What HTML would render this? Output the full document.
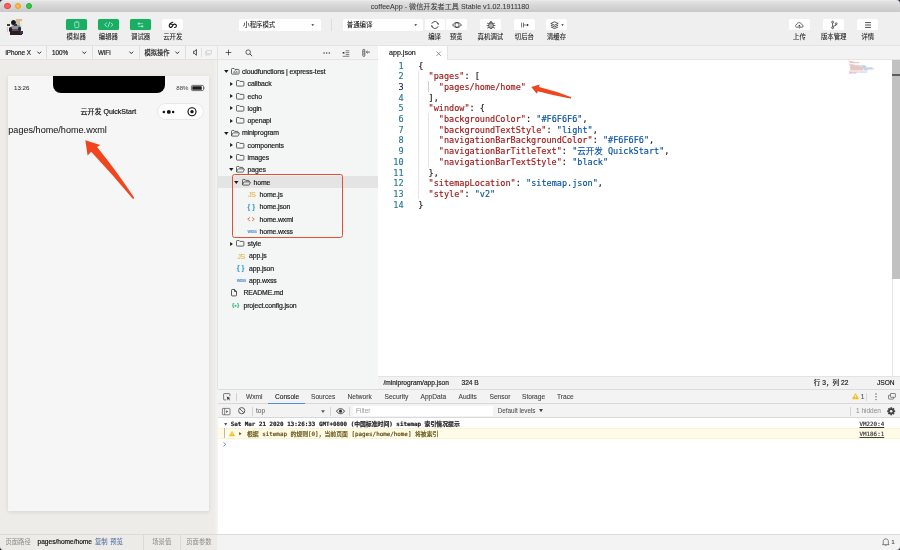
<!DOCTYPE html>
<html lang="zh-CN">
<head>
<meta charset="utf-8">
<title>coffeeApp - 微信开发者工具 Stable v1.02.1911180</title>
<style>
*{box-sizing:border-box;margin:0;padding:0}
html,body{width:900px;height:550px;overflow:hidden;background:#f3f3f3}
body{position:relative;font-family:"Liberation Sans","Noto Sans CJK SC",sans-serif;font-size:7px;color:#222;-webkit-font-smoothing:antialiased}
#wrap{position:absolute;left:0;top:0;width:900px;height:550px;will-change:transform}
.a{position:absolute}
.t{position:absolute;white-space:nowrap;line-height:10px;height:10px;-webkit-text-stroke:.18px}
.mono{font-family:"DejaVu Sans Mono","Liberation Mono","Noto Sans CJK SC",monospace}
svg{position:absolute;overflow:visible}
/* ---------- title bar ---------- */
#titlebar{left:0;top:0;width:900px;height:11.800px;background:linear-gradient(#efefef 0,#e3e3e3 1.200px,#d6d6d6 6px,#c9c9c9 11.800px)}
#titlebar .dot{position:absolute;top:2.7px;width:6.6px;height:6.6px;border-radius:50%}
/* ---------- main toolbar ---------- */
#toolbar{left:0;top:12px;width:900px;height:33px;background:#efefef}
.btn{position:absolute;top:19px;height:11.4px;border-radius:1.6px;background:#fff}
.btn.g{background:#1bad64;box-shadow:0 0 0 .6px #c9f3dd}
.lbl{-webkit-text-stroke:.08px;position:absolute;top:31.8px;height:10px;line-height:10px;font-size:6.4px;color:#1c1c1c;text-align:center;white-space:nowrap;transform:translateX(-50%)}
/* ---------- simulator ---------- */
#sim{left:0;top:45px;width:217px;height:489px;background:linear-gradient(90deg,#eeece9 214px,#f3f2f0 217px)}
#simbar{left:0;top:45px;width:217px;height:15px;background:#f4f4f4;border-top:1px solid #e2e2e2;border-bottom:1px solid #e4e2df}
#phone{left:8px;top:76px;width:200.7px;height:434.6px;background:#f6f6f6;box-shadow:0 1px 4px rgba(0,0,0,.10)}
/* ---------- file tree ---------- */
#tree{left:217px;top:45px;width:161px;height:344px;background:#f4f5f5;border-left:1px solid #e4e4e4}
#treebar{left:218px;top:45px;width:160px;height:15px;border-top:1px solid #e4e4e4;border-bottom:1px solid #e4e4e4;background:#f4f4f4}
/* ---------- editor ---------- */
#edtabs{left:378px;top:45px;width:522px;height:15px;background:#f3f3f3;border-top:1px solid #e4e4e4;border-bottom:1px solid #e4e4e4}
#edtab{left:378px;top:46px;width:69.5px;height:14px;background:#fff;border-right:1px solid #e4e4e4}
#editor{left:378px;top:60px;width:522px;height:316px;background:#fff}
.ln{-webkit-text-stroke:.14px;position:absolute;left:378px;width:25.6px;text-align:right;font-size:8.52px;line-height:10.7px;height:10.7px;color:#237893}
.cl{-webkit-text-stroke:.14px;position:absolute;left:418.3px;font-size:8.52px;line-height:10.7px;height:10.7px;white-space:pre;color:#111}
.k{color:#a31515}.s{color:#0451a5}
#edstatus{left:378px;top:376px;width:522px;height:13px;background:#f2f2f2;border-top:1px solid #e3e3e3}
/* ---------- debugger ---------- */
#dbg{left:218px;top:389px;width:682px;height:145px;background:#fff}
#dbgtabs{left:218px;top:389px;width:682px;height:15px;background:#f3f3f3;border-top:1px solid #dcdcdc;border-bottom:1px solid #d8d8d8}
#dbgbar{left:218px;top:404px;width:682px;height:14px;background:#f3f3f3;border-bottom:1px solid #dadada}
.tab{position:absolute;top:391.5px;height:10px;line-height:10px;font-size:6.62px;color:#444;white-space:nowrap;-webkit-text-stroke:.1px}
/* ---------- bottom bar ---------- */
#bottom{left:0;top:534px;width:900px;height:16px;background:#f3f3f3;border-top:1px solid #dcdcdc}
#bottoml{left:0;top:534px;width:217px;height:16px;background:#edebe8;border-top:1px solid #dddbd8}
</style>
</head>
<body>
<div id="wrap">
<!-- panels -->
<div class="a" id="toolbar"></div>
<div class="a" id="titlebar">
  <span class="dot" style="left:4.2px;background:#fc615d;border:.4px solid #e2463f"></span>
  <span class="dot" style="left:14.9px;background:#fdbc40;border:.4px solid #e0a028"></span>
  <span class="dot" style="left:25.6px;background:#34c84a;border:.4px solid #27aa35"></span>
  <div class="t" style="left:0;width:900px;text-align:center;top:2.100px;font-size:7.13px;color:#3a3a3a;-webkit-text-stroke:.06px">coffeeApp - 微信开发者工具 Stable v1.02.1911180</div>
</div>
<div class="a" id="sim"></div>
<div class="a" id="simbar"></div>
<div class="a" id="phone"></div>
<div class="a" id="tree"></div>
<div class="a" id="treebar"></div>
<div class="a" id="edtabs"></div>
<div class="a" id="edtab"></div>
<div class="a" id="editor"></div>
<div class="a" id="edstatus"></div>
<div class="a" id="dbg"></div>
<div class="a" id="dbgtabs"></div>
<div class="a" id="dbgbar"></div>
<div class="a" id="bottom"></div>
<div class="a" id="bottoml"></div>
<!--TOOLBAR-->
<!-- avatar (abstracted photo) -->
<div class="a" style="left:6px;top:18.300px;width:17px;height:16.500px;border-radius:1.500px;overflow:hidden;background:#eeedea">
 <div class="a" style="left:0;top:0;width:17px;height:16.500px;filter:blur(.55px)">
  <div class="a" style="left:9.500px;top:.5px;width:6px;height:10px;background:#cdbf9b"></div>
  <div class="a" style="left:13.800px;top:3px;width:2.200px;height:9px;background:#efe9dc"></div>
  <div class="a" style="left:1px;top:5.600px;width:2.800px;height:2px;background:#4a3a22"></div>
  <div class="a" style="left:.8px;top:9px;width:1.600px;height:5px;background:#c9c9c9"></div>
  <div class="a" style="left:4.500px;top:6.500px;width:10.500px;height:7px;border-radius:3px 3px 0 0;background:#8a91a6"></div>
  <div class="a" style="left:5.300px;top:1.400px;width:5.200px;height:5.600px;border-radius:50%;background:#15141a"></div>
  <div class="a" style="left:7.500px;top:5.500px;width:3px;height:2px;background:#3a3540"></div>
  <div class="a" style="left:3.300px;top:8.500px;width:3px;height:5px;border-radius:1.500px;background:#1b1c2b"></div>
  <div class="a" style="left:12.300px;top:9px;width:2.600px;height:4px;border-radius:1.300px;background:#23243a"></div>
  <div class="a" style="left:6px;top:10.800px;width:6px;height:2.200px;background:#6b4a4a"></div>
  <div class="a" style="left:3.600px;top:12.800px;width:12.600px;height:3.700px;background:#2a1d20"></div>
  <div class="a" style="left:13.500px;top:12.500px;width:3px;height:3px;background:#3a3358"></div>
 </div>
</div>
<!-- green mode buttons -->
<div class="btn g" style="left:65.5px;width:21.4px"></div>
<div class="btn g" style="left:97.7px;width:21.4px"></div>
<div class="btn g" style="left:129.9px;width:21.4px"></div>
<div class="btn" style="left:162.1px;width:21.4px"></div>
<svg style="left:65.5px;top:19px" width="22" height="12" viewBox="0 0 22 12"><rect x="8.800" y="2.800" width="4" height="5.900" rx=".8" fill="none" stroke="#9fe6c3" stroke-width=".9"/><line x1="9.8" y1="3.6" x2="11.8" y2="3.6" stroke="#9fe6c3" stroke-width=".5"/></svg>
<svg style="left:97.7px;top:19px" width="22" height="12" viewBox="0 0 22 12"><path d="M8.6 3.9 6.6 5.7 8.6 7.5M13 3.9 15 5.7 13 7.5M11.6 3.4 10 8" fill="none" stroke="#a8ead0" stroke-width=".9" stroke-linecap="round" stroke-linejoin="round"/></svg>
<svg style="left:0;top:0" width="200" height="40" viewBox="0 0 200 40"><path d="M138 23.600H143.100M138 26.400H143.100" stroke="#9fe6c3" stroke-width=".7"/><rect x="137.800" y="22.700" width="1.900" height="1.800" fill="#b5edd2"/><rect x="141.300" y="25.500" width="1.900" height="1.800" fill="#b5edd2"/></svg>
<svg style="left:0;top:0" width="200" height="40" viewBox="0 0 200 40"><path d="M172.800 22.300C171 22.800 169.200 24 169.200 25.800 169.200 27.200 170.600 27.800 171.600 27 172.700 26.100 172.700 24.700 174 24.200 175.300 23.800 176.500 24.800 176.400 26 176.300 27 175.500 27.500 174.600 27.500M170.300 24.200C171.100 23.900 172 24.300 172.400 25.100" fill="none" stroke="#111" stroke-width="1.100" stroke-linecap="round"/></svg>
<div class="lbl" style="left:76.2px">模拟器</div>
<div class="lbl" style="left:108.4px">编辑器</div>
<div class="lbl" style="left:140.6px">调试器</div>
<div class="lbl" style="left:172.8px">云开发</div>
<!-- dropdowns -->
<div class="btn" style="left:239px;width:81.5px;height:11.700px"></div>
<div class="t" style="left:243.3px;top:20px;font-size:6.4px;color:#111;-webkit-text-stroke:.05px">小程序模式</div>
<svg style="left:310.5px;top:24px" width="4" height="3" viewBox="0 0 4 3"><path d="M.4.3h2.600L1.700 2.100z" fill="#222"/></svg>
<div class="a" style="left:331.3px;top:19px;width:.7px;height:11.5px;background:#dcdcdc"></div>
<div class="btn" style="left:342.5px;width:80.5px;height:11.700px"></div>
<div class="t" style="left:346.8px;top:20px;font-size:6.4px;color:#111;-webkit-text-stroke:.05px">普通编译</div>
<svg style="left:413.7px;top:24px" width="4" height="3" viewBox="0 0 4 3"><path d="M.4.3h2.600L1.700 2.100z" fill="#222"/></svg>
<!-- middle buttons -->
<div class="btn" style="left:424.7px;width:20.5px"></div>
<div class="btn" style="left:446.2px;width:20.6px"></div>
<div class="btn" style="left:480px;width:21px"></div>
<div class="btn" style="left:514px;width:21px"></div>
<div class="btn" style="left:546px;width:21px"></div>
<svg style="left:429.6px;top:20px" width="10" height="10" viewBox="0 0 10 10"><path d="M1.900 3.400A3.400 3.400 0 0 1 8.300 4.200M8.100 6.600A3.400 3.400 0 0 1 1.700 5.800" fill="none" stroke="#222" stroke-width=".8" stroke-linecap="round"/><path d="M8.900 3.200 8.300 4.600 7 3.800zM1.100 6.800 1.700 5.400 3 6.200z" fill="#222"/></svg>
<svg style="left:451.500px;top:20px" width="10" height="10" viewBox="0 0 10 10"><path d="M.6 5C1.700 3.300 3.300 2.500 5 2.500S8.300 3.300 9.400 5C8.300 6.700 6.700 7.500 5 7.500S1.700 6.700.6 5z" fill="none" stroke="#222" stroke-width=".75"/><ellipse cx="5" cy="5" rx="2.100" ry="2.300" fill="none" stroke="#222" stroke-width=".7"/></svg>
<svg style="left:485.500px;top:19.700px" width="10" height="10" viewBox="0 0 10 10"><ellipse cx="5" cy="5.600" rx="2.200" ry="2.900" fill="none" stroke="#222" stroke-width=".75"/><path d="M5 2.700V8.500M3.700 3C3.800 1.900 4.300 1.400 5 1.400S6.200 1.900 6.300 3M2.800 5.600H1M9 5.600H7.200M3.100 4 1.500 3.300M6.900 4 8.500 3.300M3.100 7.300 1.500 8M6.900 7.300 8.500 8" fill="none" stroke="#222" stroke-width=".7" stroke-linecap="round"/></svg>
<svg style="left:519.500px;top:20px" width="10" height="10" viewBox="0 0 10 10"><path d="M1.600 2.600v4.800M3.500 2.600v4.800M3.500 5h4" fill="none" stroke="#222" stroke-width=".6"/><path d="M7 3.700 8.900 5 7 6.300z" fill="#222"/></svg>
<svg style="left:549.500px;top:20px" width="10" height="10" viewBox="0 0 10 10"><path d="M4.500 1.800 8.200 3.500 4.500 5.200.8 3.500zM.9 5.200 4.500 6.900 8.100 5.200M.9 6.900 4.500 8.600 8.100 6.900" fill="none" stroke="#222" stroke-width=".75" stroke-linejoin="round"/></svg>
<svg style="left:560.800px;top:23.800px" width="4" height="3" viewBox="0 0 4 3"><path d="M.3.300h2.400L1.500 1.900z" fill="#222"/></svg>
<div class="lbl" style="left:434.6px">编译</div>
<div class="lbl" style="left:456.1px">预览</div>
<div class="lbl" style="left:490.4px">真机调试</div>
<div class="lbl" style="left:524.4px">切后台</div>
<div class="lbl" style="left:556.5px">清缓存</div>
<!-- right buttons -->
<div class="btn" style="left:788.9px;width:21.2px"></div>
<div class="btn" style="left:823.1px;width:21.2px"></div>
<div class="btn" style="left:857.1px;width:21.300px"></div>
<svg style="left:795.200px;top:20.700px" width="8.700" height="8.700" viewBox="0 0 10 10"><path d="M3.600 7.300H2.500C1.400 7.300.6 6.500.6 5.500c0-.9.700-1.700 1.600-1.800C2.500 2.600 3.600 1.900 4.900 1.900c1.500 0 2.700 1 2.900 2.300.9.100 1.600.800 1.600 1.600 0 .9-.7 1.500-1.600 1.500H6.400" fill="none" stroke="#222" stroke-width=".75" stroke-linecap="round"/><path d="M5 8.300V5M3.800 6.100 5 4.800 6.200 6.100" fill="none" stroke="#222" stroke-width=".75" stroke-linecap="round" stroke-linejoin="round"/></svg>
<svg style="left:828.500px;top:19.500px" width="10" height="10" viewBox="0 0 10 10"><circle cx="3.600" cy="2.100" r=".95" fill="none" stroke="#222" stroke-width=".7"/><circle cx="3.600" cy="7.700" r=".95" fill="none" stroke="#222" stroke-width=".7"/><circle cx="7.200" cy="3.700" r=".95" fill="none" stroke="#222" stroke-width=".7"/><path d="M3.600 3.100v3.600M7.200 4.700C7.200 6 5 5.600 3.700 6.700" fill="none" stroke="#222" stroke-width=".7"/></svg>
<svg style="left:862.700px;top:20px" width="10" height="10" viewBox="0 0 10 10"><path d="M2.100 2.600h5.900M2.100 5h5.900M2.100 7.400h5.900" stroke="#222" stroke-width=".8"/></svg>
<div class="lbl" style="left:799.5px">上传</div>
<div class="lbl" style="left:833.7px">版本管理</div>
<div class="lbl" style="left:867.8px">详情</div>
<!--/TOOLBAR-->
<!--SIM-->
<!-- simulator toolbar -->
<div class="t" style="left:5.4px;top:47.700px;font-size:6.3px;color:#222">iPhone X</div>
<svg style="left:36.800px;top:50.500px" width="4.600" height="3.700" viewBox="0 0 5 4"><path d="M.5.700 2.500 2.900 4.500.7" fill="none" stroke="#2a2a2a" stroke-width="1.050"/></svg>
<div class="a" style="left:46.200px;top:46px;width:.7px;height:13px;background:#dedede"></div>
<div class="t" style="left:52px;top:47.700px;font-size:6.3px;color:#222">100%</div>
<svg style="left:82.400px;top:50.500px" width="4.600" height="3.700" viewBox="0 0 5 4"><path d="M.5.700 2.500 2.900 4.500.7" fill="none" stroke="#2a2a2a" stroke-width="1.050"/></svg>
<div class="a" style="left:92.300px;top:46px;width:.7px;height:13px;background:#dedede"></div>
<div class="t" style="left:98px;top:47.700px;font-size:6.3px;color:#222">WiFi</div>
<svg style="left:128.800px;top:50.500px" width="4.600" height="3.700" viewBox="0 0 5 4"><path d="M.5.700 2.500 2.900 4.500.7" fill="none" stroke="#2a2a2a" stroke-width="1.050"/></svg>
<div class="a" style="left:138.800px;top:46px;width:.7px;height:13px;background:#dedede"></div>
<div class="t" style="left:144.600px;top:47.500px;font-size:6.25px;color:#222">模拟操作</div>
<svg style="left:174.800px;top:50.500px" width="4.600" height="3.700" viewBox="0 0 5 4"><path d="M.5.700 2.500 2.900 4.500.7" fill="none" stroke="#2a2a2a" stroke-width="1.050"/></svg>
<div class="a" style="left:185.100px;top:46px;width:.7px;height:13px;background:#dedede"></div>
<svg style="left:192.500px;top:49px" width="5" height="7" viewBox="0 0 5 7"><path d="M.6 2.200H1.800L3.400.5V6.300L1.800 4.600H.6Z" fill="none" stroke="#2a2a2a" stroke-width=".8" stroke-linejoin="round"/></svg>
<div class="a" style="left:201px;top:48px;width:.7px;height:9px;background:#dedede"></div>
<svg style="left:204.800px;top:49.600px" width="7" height="6" viewBox="0 0 7 6"><path d="M1.600.5h4.900v3.200H1.600zM1.600 1.700H.5v3.200h.9v.8l.9-.8h2.600V3.700" fill="none" stroke="#c4c4c4" stroke-width=".6" stroke-linejoin="round"/></svg>
<!-- phone status bar -->
<div class="a" style="left:52.5px;top:76px;width:112.800px;height:17px;background:#000;border-radius:0 0 8px 8px"></div>
<div class="t" style="left:14px;top:83px;font-size:6.2px;color:#2a2a2a;-webkit-text-stroke:.05px">13:26</div>
<div class="t" style="left:176.300px;top:83px;font-size:6.1px;color:#3a3a3a;-webkit-text-stroke:0">88%</div>
<svg style="left:191px;top:85px" width="14.500" height="6.200" viewBox="0 0 14 6"><rect x=".35" y=".35" width="11.800" height="5.100" rx="1.300" fill="none" stroke="#444" stroke-width=".75"/><rect x="1.200" y="1.200" width="9.200" height="3.400" rx=".6" fill="#1c1c1c"/><path d="M12.800 1.900c.7.200.7 1.800 0 2z" fill="#555"/></svg>
<!-- nav bar -->
<div class="t" style="left:8px;width:200.700px;text-align:center;top:106.500px;font-size:7px;color:#111">云开发 QuickStart</div>
<div class="a" style="left:157.300px;top:102.800px;width:46.400px;height:17px;border-radius:8.500px;background:#fdfdfd;border:.6px solid #e7e7e7"></div>
<svg style="left:157.300px;top:103px" width="46" height="17" viewBox="0 0 46 17"><circle cx="6.900" cy="8.900" r="1.250" fill="#111"/><circle cx="11.800" cy="8.900" r="1.950" fill="#111"/><circle cx="16.100" cy="8.900" r="1.250" fill="#111"/><circle cx="35" cy="8.700" r="4" fill="none" stroke="#111" stroke-width="1.150"/><circle cx="35" cy="8.700" r="1.650" fill="#111"/></svg>
<!-- page content -->
<div class="t" style="left:8.300px;top:123.600px;height:12px;line-height:12px;font-size:9.1px;color:#1a1a1a;-webkit-text-stroke:.05px">pages/home/home.wxml</div>
<!-- red arrow in simulator -->
<svg style="left:0;top:0" width="900" height="550" viewBox="0 0 900 550"><path d="M85.300 140.200 100.300 145 97 146.900 Q116 170 133.900 197.300 A.9.900 0 0 1 132.500 198.500 Q112 174 91.200 151.800 L87.600 155.500Z" fill="#f0451f"/></svg>
<!--/SIM-->
<!--TREE-->
<div class="a" style="left:218px;top:175.95px;width:160px;height:12.3px;background:#e4e4e4"></div>
<svg style="left:223.5px;top:70.00px" width="4.6" height="3" viewBox="0 0 4.600 3"><path d="M.1.100H4.500L2.300 2.900Z" fill="#1a1a1a"/></svg>
<svg style="left:231.0px;top:68.00px" width="8.6" height="6.6" viewBox="0 0 8.600 6.600"><path d="M.5 1.300Q.5.500 1.300.500H3.100L3.900 1.400H7.300Q8.100 1.400 8.100 2.200V5.300Q8.100 6.100 7.300 6.100H1.300Q.5 6.100.5 5.300Z" fill="none" stroke="#333" stroke-width=".75" stroke-linejoin="round"/><path d="M3 4.800H5.700Q6.400 4.700 6.300 4.100 6.200 3.600 5.600 3.600 5.400 2.700 4.500 2.700 3.700 2.700 3.500 3.500 2.600 3.500 2.600 4.200 2.600 4.700 3 4.800Z" fill="none" stroke="#333" stroke-width=".55"/></svg>
<div class="t" style="left:242.0px;top:66.95px;font-size:6.9px;letter-spacing:-.13px;color:#1a1a1a">cloudfunctions | express-test</div>
<svg style="left:229.7px;top:81.60px" width="3" height="4.200" viewBox="0 0 3 4.200"><path d="M.1.100V4.100L2.900 2.100Z" fill="#1a1a1a"/></svg>
<svg style="left:236.4px;top:80.30px" width="8.4" height="6.6" viewBox="0 0 8.4 6.6"><path d="M.5 1.300Q.5.500 1.300.500H3.100L3.900 1.400H7.100Q7.900 1.400 7.900 2.200V5.300Q7.900 6.100 7.100 6.100H1.300Q.5 6.100.5 5.300Z" fill="none" stroke="#333" stroke-width=".75" stroke-linejoin="round"/></svg>
<div class="t" style="left:247.6px;top:79.25px;font-size:6.9px;letter-spacing:-.13px;color:#1a1a1a">callback</div>
<svg style="left:229.7px;top:93.90px" width="3" height="4.200" viewBox="0 0 3 4.200"><path d="M.1.100V4.100L2.900 2.100Z" fill="#1a1a1a"/></svg>
<svg style="left:236.4px;top:92.60px" width="8.4" height="6.6" viewBox="0 0 8.4 6.6"><path d="M.5 1.300Q.5.500 1.300.500H3.100L3.900 1.400H7.100Q7.900 1.400 7.900 2.200V5.300Q7.900 6.100 7.100 6.100H1.300Q.5 6.100.5 5.300Z" fill="none" stroke="#333" stroke-width=".75" stroke-linejoin="round"/></svg>
<div class="t" style="left:247.6px;top:91.55px;font-size:6.9px;letter-spacing:-.13px;color:#1a1a1a">echo</div>
<svg style="left:229.7px;top:106.20px" width="3" height="4.200" viewBox="0 0 3 4.200"><path d="M.1.100V4.100L2.900 2.100Z" fill="#1a1a1a"/></svg>
<svg style="left:236.4px;top:104.90px" width="8.4" height="6.6" viewBox="0 0 8.4 6.6"><path d="M.5 1.300Q.5.500 1.300.500H3.100L3.900 1.400H7.100Q7.900 1.400 7.900 2.200V5.300Q7.900 6.100 7.100 6.100H1.300Q.5 6.100.5 5.300Z" fill="none" stroke="#333" stroke-width=".75" stroke-linejoin="round"/></svg>
<div class="t" style="left:247.6px;top:103.85px;font-size:6.9px;letter-spacing:-.13px;color:#1a1a1a">login</div>
<svg style="left:229.7px;top:118.50px" width="3" height="4.200" viewBox="0 0 3 4.200"><path d="M.1.100V4.100L2.900 2.100Z" fill="#1a1a1a"/></svg>
<svg style="left:236.4px;top:117.20px" width="8.4" height="6.6" viewBox="0 0 8.4 6.6"><path d="M.5 1.300Q.5.500 1.300.500H3.100L3.900 1.400H7.100Q7.900 1.400 7.900 2.200V5.300Q7.900 6.100 7.100 6.100H1.300Q.5 6.100.5 5.300Z" fill="none" stroke="#333" stroke-width=".75" stroke-linejoin="round"/></svg>
<div class="t" style="left:247.6px;top:116.15px;font-size:6.9px;letter-spacing:-.13px;color:#1a1a1a">openapi</div>
<svg style="left:223.5px;top:131.50px" width="4.6" height="3" viewBox="0 0 4.600 3"><path d="M.1.100H4.500L2.300 2.900Z" fill="#1a1a1a"/></svg>
<svg style="left:231.0px;top:129.50px" width="8.8" height="6.6" viewBox="0 0 8.800 6.600"><path d="M.5 5.600V1.300Q.5.500 1.300.500H2.900L3.700 1.400H6.300Q7.100 1.400 7.100 2.200V2.900M.5 5.700 1.700 3.300Q1.900 2.900 2.400 2.900H8Q8.500 2.900 8.300 3.400L7.400 5.600Q7.200 6.100 6.700 6.100H1Q.5 6.100.5 5.600" fill="none" stroke="#333" stroke-width=".75" stroke-linejoin="round"/></svg>
<div class="t" style="left:242.0px;top:128.45px;font-size:6.9px;letter-spacing:-.13px;color:#1a1a1a">miniprogram</div>
<svg style="left:229.7px;top:143.10px" width="3" height="4.200" viewBox="0 0 3 4.200"><path d="M.1.100V4.100L2.900 2.100Z" fill="#1a1a1a"/></svg>
<svg style="left:236.4px;top:141.80px" width="8.4" height="6.6" viewBox="0 0 8.4 6.6"><path d="M.5 1.300Q.5.500 1.300.500H3.100L3.900 1.400H7.100Q7.900 1.400 7.900 2.200V5.300Q7.900 6.100 7.100 6.100H1.300Q.5 6.100.5 5.300Z" fill="none" stroke="#333" stroke-width=".75" stroke-linejoin="round"/></svg>
<div class="t" style="left:247.6px;top:140.75px;font-size:6.9px;letter-spacing:-.13px;color:#1a1a1a">components</div>
<svg style="left:229.7px;top:155.40px" width="3" height="4.200" viewBox="0 0 3 4.200"><path d="M.1.100V4.100L2.900 2.100Z" fill="#1a1a1a"/></svg>
<svg style="left:236.4px;top:154.10px" width="8.4" height="6.6" viewBox="0 0 8.4 6.6"><path d="M.5 1.300Q.5.500 1.300.500H3.100L3.900 1.400H7.100Q7.900 1.400 7.900 2.200V5.300Q7.900 6.100 7.100 6.100H1.300Q.5 6.100.5 5.300Z" fill="none" stroke="#333" stroke-width=".75" stroke-linejoin="round"/></svg>
<div class="t" style="left:247.6px;top:153.05px;font-size:6.9px;letter-spacing:-.13px;color:#1a1a1a">images</div>
<svg style="left:228.7px;top:168.40px" width="4.6" height="3" viewBox="0 0 4.600 3"><path d="M.1.100H4.500L2.300 2.900Z" fill="#1a1a1a"/></svg>
<svg style="left:236.4px;top:166.40px" width="8.8" height="6.6" viewBox="0 0 8.800 6.600"><path d="M.5 5.600V1.300Q.5.500 1.300.500H2.900L3.700 1.400H6.300Q7.100 1.400 7.100 2.200V2.900M.5 5.700 1.700 3.300Q1.900 2.900 2.400 2.900H8Q8.500 2.900 8.300 3.400L7.400 5.600Q7.200 6.100 6.700 6.100H1Q.5 6.100.5 5.600" fill="none" stroke="#333" stroke-width=".75" stroke-linejoin="round"/></svg>
<div class="t" style="left:247.6px;top:165.35px;font-size:6.9px;letter-spacing:-.13px;color:#1a1a1a">pages</div>
<svg style="left:233.9px;top:180.70px" width="4.6" height="3" viewBox="0 0 4.600 3"><path d="M.1.100H4.500L2.300 2.900Z" fill="#1a1a1a"/></svg>
<svg style="left:242.0px;top:178.70px" width="8.8" height="6.6" viewBox="0 0 8.800 6.600"><path d="M.5 5.600V1.300Q.5.500 1.300.500H2.900L3.700 1.400H6.300Q7.100 1.400 7.100 2.200V2.900M.5 5.700 1.700 3.300Q1.900 2.900 2.400 2.900H8Q8.500 2.900 8.300 3.400L7.400 5.600Q7.200 6.100 6.700 6.100H1Q.5 6.100.5 5.600" fill="none" stroke="#333" stroke-width=".75" stroke-linejoin="round"/></svg>
<div class="t" style="left:253.6px;top:177.65px;font-size:6.9px;letter-spacing:-.13px;color:#1a1a1a">home</div>
<div class="t" style="left:248.0px;top:190.15px;font-size:7.4px;color:#e4ae32;letter-spacing:-.75px;-webkit-text-stroke:0">JS</div>
<div class="t" style="left:259.5px;top:189.95px;font-size:6.9px;letter-spacing:-.13px;color:#1a1a1a">home.js</div>
<div class="t" style="left:247.6px;top:201.70px;font-size:6.4px;font-weight:700;color:#3aa0d4;letter-spacing:2.300px">{}</div>
<div class="t" style="left:259.5px;top:202.25px;font-size:6.9px;letter-spacing:-.13px;color:#1a1a1a">home.json</div>
<svg style="left:247.2px;top:217.00px" width="8" height="4.400" viewBox="0 0 8 4.400"><path d="M2.700.600.700 2.200 2.700 3.800M5.300.600 7.300 2.200 5.300 3.800" fill="none" stroke="#e0683a" stroke-width=".85" stroke-linecap="round" stroke-linejoin="round"/></svg>
<div class="t" style="left:259.5px;top:214.55px;font-size:6.9px;letter-spacing:-.13px;color:#1a1a1a">home.wxml</div>
<div class="t" style="left:247.4px;top:226.70px;font-size:4.5px;font-weight:700;color:#4a8ed0;letter-spacing:-.5px;-webkit-text-stroke:0">wxss</div>
<div class="t" style="left:259.5px;top:226.85px;font-size:6.9px;letter-spacing:-.13px;color:#1a1a1a">home.wxss</div>
<svg style="left:229.7px;top:241.50px" width="3" height="4.200" viewBox="0 0 3 4.200"><path d="M.1.100V4.100L2.900 2.100Z" fill="#1a1a1a"/></svg>
<svg style="left:236.4px;top:240.20px" width="8.4" height="6.6" viewBox="0 0 8.4 6.6"><path d="M.5 1.300Q.5.500 1.300.500H3.100L3.900 1.400H7.100Q7.900 1.400 7.900 2.200V5.300Q7.900 6.100 7.100 6.100H1.300Q.5 6.100.5 5.300Z" fill="none" stroke="#333" stroke-width=".75" stroke-linejoin="round"/></svg>
<div class="t" style="left:247.6px;top:239.15px;font-size:6.9px;letter-spacing:-.13px;color:#1a1a1a">style</div>
<div class="t" style="left:237.3px;top:251.65px;font-size:7.4px;color:#e4ae32;letter-spacing:-.75px;-webkit-text-stroke:0">JS</div>
<div class="t" style="left:249.0px;top:251.45px;font-size:6.9px;letter-spacing:-.13px;color:#1a1a1a">app.js</div>
<div class="t" style="left:236.9px;top:263.20px;font-size:6.4px;font-weight:700;color:#3aa0d4;letter-spacing:2.300px">{}</div>
<div class="t" style="left:249.0px;top:263.75px;font-size:6.9px;letter-spacing:-.13px;color:#1a1a1a">app.json</div>
<div class="t" style="left:236.7px;top:275.90px;font-size:4.5px;font-weight:700;color:#4a8ed0;letter-spacing:-.5px;-webkit-text-stroke:0">wxss</div>
<div class="t" style="left:249.0px;top:276.05px;font-size:6.9px;letter-spacing:-.13px;color:#1a1a1a">app.wxss</div>
<svg style="left:231.0px;top:289.20px" width="6" height="7.400" viewBox="0 0 6 7.400"><path d="M.5 1.200Q.5.500 1.200.500H3.600L5.500 2.400V6.200Q5.500 6.900 4.800 6.900H1.200Q.5 6.900.5 6.200ZM3.500.600V2.500H5.400" fill="none" stroke="#222" stroke-width=".75" stroke-linejoin="round"/></svg>
<div class="t" style="left:243.5px;top:288.35px;font-size:6.9px;letter-spacing:-.13px;color:#1a1a1a">README.md</div>
<div class="t" style="left:231.9px;top:300.30px;font-size:6px;font-weight:700;color:#3fb580;letter-spacing:.1px">{<span style="font-size:4.200px;position:relative;top:-.7px">●</span>}</div>
<div class="t" style="left:243.5px;top:300.65px;font-size:6.9px;letter-spacing:-.13px;color:#1a1a1a">project.config.json</div>
<div class="a" style="left:231.700px;top:174.400px;width:111.800px;height:63.200px;border:1.600px solid #e1512f;border-radius:2.600px"></div>
<svg style="left:225.100px;top:49.300px" width="7" height="7" viewBox="0 0 7 7"><path d="M3.500.700V6.300M.7 3.500H6.300" stroke="#333" stroke-width=".75"/></svg>
<svg style="left:244.500px;top:48.800px" width="8" height="8" viewBox="0 0 8 8"><circle cx="3.200" cy="3.200" r="2.300" fill="none" stroke="#333" stroke-width=".75"/><path d="M4.900 4.900 6.900 6.900" stroke="#333" stroke-width=".85" stroke-linecap="round"/></svg>
<svg style="left:322.800px;top:51.600px" width="8" height="2" viewBox="0 0 8 2"><circle cx="1.100" cy="1" r=".7" fill="#333"/><circle cx="3.700" cy="1" r=".7" fill="#333"/><circle cx="6.300" cy="1" r=".7" fill="#333"/></svg>
<svg style="left:342.300px;top:49.600px" width="8" height="7" viewBox="0 0 8 7"><path d="M3.600.800H7.300M3.600 2.700H7.300M3.600 4.600H7.300M.7 6.300H7.300" stroke="#333" stroke-width=".6"/><rect x=".7" y="2" width="1.700" height="1.600" fill="#333"/></svg>
<svg style="left:362.200px;top:49px" width="9" height="8" viewBox="0 0 9 8"><rect x=".8" y=".5" width="2" height="6.800" rx=".5" fill="none" stroke="#333" stroke-width=".7"/><path d="M.8 2.700H2.800M.8 5H2.800" stroke="#333" stroke-width=".5"/><path d="M8 3.100H4.400M5.700 1.800 4.300 3.100 5.700 4.400" fill="none" stroke="#333" stroke-width=".7"/></svg>
<!--/TREE-->
<!--EDITOR-->
<div class="t" style="left:389px;top:47.500px;font-size:7.1px;color:#222">app.json</div>
<svg style="left:435.700px;top:50.500px" width="5.400" height="5.400" viewBox="0 0 5.400 5.400"><path d="M.5.500 4.900 4.900M4.900.500.5 4.900" stroke="#6e6e6e" stroke-width=".75"/></svg>
<div class="a" style="left:418.300px;top:70.65px;width:.6px;height:128.40px;background:#e6e6e6"></div>
<div class="a" style="left:428.100px;top:81.35px;width:.7px;height:10.70px;background:#cdcdcd"></div>
<div class="a" style="left:428.100px;top:113.45px;width:.6px;height:53.50px;background:#e6e6e6"></div>
<div class="ln mono" style="top:60.50px;color:#237893">1</div>
<div class="cl mono" style="top:60.50px">{</div>
<div class="ln mono" style="top:71.20px;color:#237893">2</div>
<div class="cl mono" style="top:71.20px">  <span class="k">"pages"</span>: [</div>
<div class="ln mono" style="top:81.90px;color:#0b216f">3</div>
<div class="cl mono" style="top:81.90px">    <span class="k">"pages/home/home"</span></div>
<div class="ln mono" style="top:92.60px;color:#237893">4</div>
<div class="cl mono" style="top:92.60px">  ],</div>
<div class="ln mono" style="top:103.30px;color:#237893">5</div>
<div class="cl mono" style="top:103.30px">  <span class="k">"window"</span>: {</div>
<div class="ln mono" style="top:114.00px;color:#237893">6</div>
<div class="cl mono" style="top:114.00px">    <span class="k">"backgroundColor"</span>: <span class="s">"#F6F6F6"</span>,</div>
<div class="ln mono" style="top:124.70px;color:#237893">7</div>
<div class="cl mono" style="top:124.70px">    <span class="k">"backgroundTextStyle"</span>: <span class="s">"light"</span>,</div>
<div class="ln mono" style="top:135.40px;color:#237893">8</div>
<div class="cl mono" style="top:135.40px">    <span class="k">"navigationBarBackgroundColor"</span>: <span class="s">"#F6F6F6"</span>,</div>
<div class="ln mono" style="top:146.10px;color:#237893">9</div>
<div class="cl mono" style="top:146.10px">    <span class="k">"navigationBarTitleText"</span>: <span class="s">"云开发 QuickStart"</span>,</div>
<div class="ln mono" style="top:156.80px;color:#237893">10</div>
<div class="cl mono" style="top:156.80px">    <span class="k">"navigationBarTextStyle"</span>: <span class="s">"black"</span></div>
<div class="ln mono" style="top:167.50px;color:#237893">11</div>
<div class="cl mono" style="top:167.50px">  },</div>
<div class="ln mono" style="top:178.20px;color:#237893">12</div>
<div class="cl mono" style="top:178.20px">  <span class="k">"sitemapLocation"</span>: <span class="s">"sitemap.json"</span>,</div>
<div class="ln mono" style="top:188.90px;color:#237893">13</div>
<div class="cl mono" style="top:188.90px">  <span class="k">"style"</span>: <span class="s">"v2"</span></div>
<div class="ln mono" style="top:199.60px;color:#237893">14</div>
<div class="cl mono" style="top:199.60px">}</div>
<svg style="left:0;top:0" width="900" height="550" viewBox="0 0 900 550"><rect x="848.00" y="60.30" width="0.54" height=".8" fill="#777" opacity="0.22"/><rect x="849.08" y="61.33" width="3.78" height=".8" fill="#c2605f" opacity="0.5"/><rect x="852.86" y="61.33" width="1.62" height=".8" fill="#777" opacity="0.22"/><rect x="850.16" y="62.36" width="9.18" height=".8" fill="#c2605f" opacity="0.5"/><rect x="849.08" y="63.39" width="1.08" height=".8" fill="#777" opacity="0.22"/><rect x="849.08" y="64.42" width="4.32" height=".8" fill="#c2605f" opacity="0.5"/><rect x="853.40" y="64.42" width="1.62" height=".8" fill="#777" opacity="0.22"/><rect x="850.16" y="65.45" width="9.18" height=".8" fill="#c2605f" opacity="0.5"/><rect x="859.34" y="65.45" width="1.08" height=".8" fill="#777" opacity="0.22"/><rect x="860.42" y="65.45" width="4.86" height=".8" fill="#5c8fc4" opacity="0.55"/><rect x="865.28" y="65.45" width="0.54" height=".8" fill="#777" opacity="0.22"/><rect x="850.16" y="66.48" width="11.34" height=".8" fill="#c2605f" opacity="0.5"/><rect x="861.50" y="66.48" width="1.08" height=".8" fill="#777" opacity="0.22"/><rect x="862.58" y="66.48" width="3.78" height=".8" fill="#5c8fc4" opacity="0.55"/><rect x="866.36" y="66.48" width="0.54" height=".8" fill="#777" opacity="0.22"/><rect x="850.16" y="67.51" width="16.20" height=".8" fill="#c2605f" opacity="0.5"/><rect x="866.36" y="67.51" width="1.08" height=".8" fill="#777" opacity="0.22"/><rect x="867.44" y="67.51" width="4.86" height=".8" fill="#5c8fc4" opacity="0.55"/><rect x="872.30" y="67.51" width="0.54" height=".8" fill="#777" opacity="0.22"/><rect x="850.16" y="68.54" width="12.96" height=".8" fill="#c2605f" opacity="0.5"/><rect x="863.12" y="68.54" width="1.08" height=".8" fill="#777" opacity="0.22"/><rect x="864.20" y="68.54" width="9.61" height=".8" fill="#5c8fc4" opacity="0.55"/><rect x="873.81" y="68.54" width="0.54" height=".8" fill="#777" opacity="0.22"/><rect x="850.16" y="69.57" width="12.96" height=".8" fill="#c2605f" opacity="0.5"/><rect x="863.12" y="69.57" width="1.08" height=".8" fill="#777" opacity="0.22"/><rect x="864.20" y="69.57" width="3.78" height=".8" fill="#5c8fc4" opacity="0.55"/><rect x="849.08" y="70.60" width="1.08" height=".8" fill="#777" opacity="0.22"/><rect x="849.08" y="71.63" width="9.18" height=".8" fill="#c2605f" opacity="0.5"/><rect x="858.26" y="71.63" width="1.08" height=".8" fill="#777" opacity="0.22"/><rect x="859.34" y="71.63" width="7.56" height=".8" fill="#5c8fc4" opacity="0.55"/><rect x="866.90" y="71.63" width="0.54" height=".8" fill="#777" opacity="0.22"/><rect x="849.08" y="72.66" width="3.78" height=".8" fill="#c2605f" opacity="0.5"/><rect x="852.86" y="72.66" width="1.08" height=".8" fill="#777" opacity="0.22"/><rect x="853.94" y="72.66" width="2.16" height=".8" fill="#5c8fc4" opacity="0.55"/><rect x="848.00" y="73.69" width="0.54" height=".8" fill="#777" opacity="0.22"/></svg>
<div class="a" style="left:892px;top:60px;width:8px;height:316px;background:#fff;border-left:.6px solid #e4e4e4"></div>
<div class="a" style="left:892px;top:60px;width:7.500px;height:218.600px;background:#c1c1c1"></div>
<div class="a" style="left:892px;top:74px;width:7.500px;height:1.800px;background:#5c5c5c"></div>
<svg style="left:0;top:0" width="900" height="550" viewBox="0 0 900 550"><path d="M531.200 87.100 539.700 84.400 539 86.900 Q556 91 570.700 97 A.8.800 0 0 1 570.200 98.500 Q553 95.500 537.800 91.300 L536.900 93.700Z" fill="#f0451f"/></svg>
<div class="t" style="left:383.500px;top:377.700px;font-size:6.62px;color:#222">/miniprogram/app.json</div>
<div class="t" style="left:461.500px;top:377.700px;font-size:6.62px;color:#222">324 B</div>
<div class="t" style="left:813.800px;top:377.700px;font-size:6.62px;color:#222">行 3，列 22</div>
<div class="t" style="left:877px;top:377.700px;font-size:6.62px;color:#222">JSON</div>
<!--/EDITOR-->
<!--DBG-->
<!-- devtools tab row -->
<svg style="left:222.600px;top:392.600px" width="8" height="8" viewBox="0 0 8 8"><path d="M6.900 3.200V1.300Q6.900.600 6.200.600H1.300Q.6.600.6 1.300V6.200Q.6 6.900 1.300 6.900H3.200" fill="none" stroke="#444" stroke-width=".7"/><path d="M3.600 3.600 7.400 5 5.800 5.700 7.300 7.200 6.900 7.600 5.400 6.100 4.800 7.500Z" fill="#333"/></svg>
<div class="a" style="left:236px;top:392.500px;width:.7px;height:8.500px;background:#d0d0d0"></div>
<div class="tab" style="left:246px">Wxml</div>
<div class="tab" style="left:275px;color:#222">Console</div>
<div class="tab" style="left:311px">Sources</div>
<div class="tab" style="left:347.500px">Network</div>
<div class="tab" style="left:384.500px">Security</div>
<div class="tab" style="left:420.500px">AppData</div>
<div class="tab" style="left:458.500px">Audits</div>
<div class="tab" style="left:489.500px">Sensor</div>
<div class="tab" style="left:522px">Storage</div>
<div class="tab" style="left:557px">Trace</div>
<div class="a" style="left:268.300px;top:402.800px;width:36.700px;height:1.200px;background:#4a90e2"></div>
<svg style="left:851.800px;top:393.300px" width="7" height="6.400" viewBox="0 0 7 6.400"><path d="M3.500.400 6.700 6H.3Z" fill="#f5bd27" stroke="#f5bd27" stroke-width=".5" stroke-linejoin="round"/><path d="M3.500 2.300V4.100M3.500 4.800V5.300" stroke="#fff" stroke-width=".7"/></svg>
<div class="tab" style="left:860.800px;color:#555">1</div>
<div class="a" style="left:866.300px;top:392.500px;width:.7px;height:8.500px;background:#d8d8d8"></div>
<svg style="left:875.300px;top:393px" width="2" height="8" viewBox="0 0 2 8"><circle cx="1" cy="1" r=".7" fill="#555"/><circle cx="1" cy="3.800" r=".7" fill="#555"/><circle cx="1" cy="6.600" r=".7" fill="#555"/></svg>
<svg style="left:887.600px;top:393.300px" width="8" height="7" viewBox="0 0 8 7"><rect x="2.400" y=".5" width="5" height="3.800" rx=".5" fill="none" stroke="#555" stroke-width=".7"/><path d="M2.400 2.200H1.100Q.5 2.200.5 2.800V5.500Q.5 6.100 1.100 6.100H5Q5.600 6.100 5.600 5.500V4.300" fill="none" stroke="#555" stroke-width=".7"/></svg>
<!-- console toolbar -->
<svg style="left:222px;top:407.500px" width="8.400" height="7.200" viewBox="0 0 8.400 7.200"><rect x=".4" y=".4" width="7.600" height="6.400" rx=".6" fill="none" stroke="#555" stroke-width=".7"/><path d="M2.700.4V6.800" stroke="#555" stroke-width=".7"/><path d="M4.200 2.300 6.200 3.600 4.200 4.900Z" fill="#555"/></svg>
<svg style="left:238px;top:407.400px" width="7.400" height="7.400" viewBox="0 0 7.400 7.400"><circle cx="3.700" cy="3.700" r="3.100" fill="none" stroke="#444" stroke-width=".85"/><path d="M1.500 1.600 5.900 5.800" stroke="#444" stroke-width=".85"/></svg>
<div class="a" style="left:251.700px;top:406.500px;width:.7px;height:9px;background:#d4d4d4"></div>
<div class="t" style="left:256px;top:406.200px;font-size:6.6px;color:#5a5a5a;-webkit-text-stroke:0">top</div>
<svg style="left:320.800px;top:409.600px" width="4" height="3.200" viewBox="0 0 4 3.200"><path d="M.1.200H3.900L2 3Z" fill="#555"/></svg>
<div class="a" style="left:329.500px;top:406.500px;width:.7px;height:9px;background:#d4d4d4"></div>
<svg style="left:335.800px;top:407.800px" width="9" height="6.400" viewBox="0 0 9 6.400"><path d="M.5 3.200C1.500 1.500 2.900.700 4.500.700S7.500 1.500 8.500 3.200C7.500 4.900 6.100 5.700 4.500 5.700S1.500 4.900.5 3.200Z" fill="none" stroke="#3c3c3c" stroke-width=".95"/><circle cx="4.500" cy="3.200" r="1.600" fill="#3c3c3c"/></svg>
<div class="a" style="left:348.800px;top:406.500px;width:.7px;height:9px;background:#d4d4d4"></div>
<div class="a" style="left:353.400px;top:406px;width:140px;height:10.300px;background:#fff"></div>
<div class="t" style="left:356px;top:406.200px;font-size:6.5px;color:#9a9a9a;-webkit-text-stroke:0">Filter</div>
<div class="t" style="left:497.700px;top:406.200px;font-size:6.3px;color:#4a4a4a;-webkit-text-stroke:.04px">Default levels</div>
<svg style="left:538.600px;top:409.100px" width="4" height="3.400" viewBox="0 0 4 3.400"><path d="M.1.100H3.900L2 3.300Z" fill="#444"/></svg>
<div class="a" style="left:850.300px;top:406.500px;width:.7px;height:9px;background:#d4d4d4"></div>
<div class="t" style="left:856px;top:406.200px;font-size:6.5px;color:#8a8a8a;-webkit-text-stroke:0">1 hidden</div>
<svg style="left:886.800px;top:406.900px" width="8.400" height="8.400" viewBox="-4.200 -4.200 8.400 8.400"><g fill="#444"><circle r="2.900"/><g id="tt"><rect x="-.95" y="-4" width="1.900" height="8" rx=".3"/></g><use href="#tt" transform="rotate(45)"/><use href="#tt" transform="rotate(90)"/><use href="#tt" transform="rotate(135)"/></g><circle r="1.250" fill="#f3f3f3"/></svg>
<!-- console messages -->
<svg style="left:223.800px;top:422.600px" width="3.400" height="2.800" viewBox="0 0 3.400 2.800"><path d="M.1.100H3.300L1.700 2.700Z" fill="#555"/></svg>
<div class="t mono" style="left:230.700px;top:418.900px;font-size:5.870px;font-weight:700;color:#222">Sat Mar 21 2020 13:26:33 GMT+0800 (中国标准时间) sitemap 索引情况提示</div>
<div class="t mono" style="left:859.500px;top:418.900px;font-size:5.870px;color:#333;text-decoration:underline">VM220:4</div>
<div class="a" style="left:218px;top:427.900px;width:682px;height:10.900px;background:#fffbe8;border-top:.5px solid #fff3cc;border-bottom:.5px solid #fff3cc"></div>
<div class="a" style="left:224px;top:428.200px;width:.8px;height:10.300px;background:#b9b9b9"></div>
<svg style="left:228.600px;top:430.900px" width="6" height="5.400" viewBox="0 0 6 5.400"><path d="M3 .400 5.700 5H.3Z" fill="#f5bd27" stroke="#f5bd27" stroke-width=".5" stroke-linejoin="round"/><path d="M3 1.900V3.400M3 4V4.500" stroke="#fff" stroke-width=".6"/></svg>
<svg style="left:239px;top:432.200px" width="2.800" height="3.400" viewBox="0 0 2.800 3.400"><path d="M.1.100V3.300L2.700 1.700Z" fill="#6b5a1e"/></svg>
<div class="t mono" style="left:247px;top:429.300px;font-size:5.870px;color:#5c4b0a">根据 sitemap 的规则[0]，当前页面 [pages/home/home] 将被索引</div>
<div class="t mono" style="left:859.500px;top:429.300px;font-size:5.870px;color:#444;text-decoration:underline">VM186:1</div>
<svg style="left:222.800px;top:441.500px" width="3.400" height="4.800" viewBox="0 0 3.400 4.800"><path d="M.5.500 2.800 2.400.5 4.300" fill="none" stroke="#3d72d8" stroke-width=".8"/></svg>
<!--/DBG-->
<!--BOTTOM-->
<!-- bottom status bar -->
<div class="t" style="left:5.500px;top:536.800px;font-size:6.3px;color:#8a8a8a;-webkit-text-stroke:0">页面路径</div>
<div class="t" style="left:37.500px;top:536.800px;font-size:6.58px;color:#111">pages/home/home</div>
<div class="t" style="left:95px;top:536.800px;font-size:6.3px;color:#4f6ea2;-webkit-text-stroke:.05px">复制</div>
<div class="t" style="left:110.300px;top:536.800px;font-size:6.3px;color:#4f6ea2;-webkit-text-stroke:.05px">预览</div>
<div class="a" style="left:143.300px;top:535px;width:.7px;height:15px;background:#dcdad7"></div>
<div class="t" style="left:152.300px;top:536.800px;font-size:6.3px;color:#8a8a8a;-webkit-text-stroke:0">场景值</div>
<div class="a" style="left:179.800px;top:535px;width:.7px;height:15px;background:#dcdad7"></div>
<div class="t" style="left:186.300px;top:536.800px;font-size:6.3px;color:#8a8a8a;-webkit-text-stroke:0">页面参数</div>
<svg style="left:881.600px;top:538.300px" width="7.600" height="8" viewBox="0 0 8 8.400"><path d="M1.300 6.300V3.600C1.300 2 2.400.9 4 .9S6.700 2 6.700 3.600V6.300L7.400 7H.6Z" fill="none" stroke="#444" stroke-width=".7" stroke-linejoin="round"/><path d="M3.200 7.600Q4 8.300 4.800 7.600" fill="none" stroke="#444" stroke-width=".6"/></svg>
<div class="t" style="left:891.600px;top:537.300px;font-size:5.6px;color:#555">1</div>
<!-- window corners -->
<svg style="left:0;top:0" width="900" height="550" viewBox="0 0 900 550"><path d="M0 0H3.500A3.500 3.500 0 0 0 0 3.500Z" fill="#2b2b38"/><path d="M900 0V3.500A3.500 3.500 0 0 0 896.500 0Z" fill="#2b2b38"/><path d="M0 550V546.500A3.500 3.500 0 0 0 3.500 550Z" fill="#1c1c24"/><path d="M900 550H896.500A3.500 3.500 0 0 0 900 546.500Z" fill="#1c1c24"/></svg>
<!--/BOTTOM-->
</div>
</body>
</html>
